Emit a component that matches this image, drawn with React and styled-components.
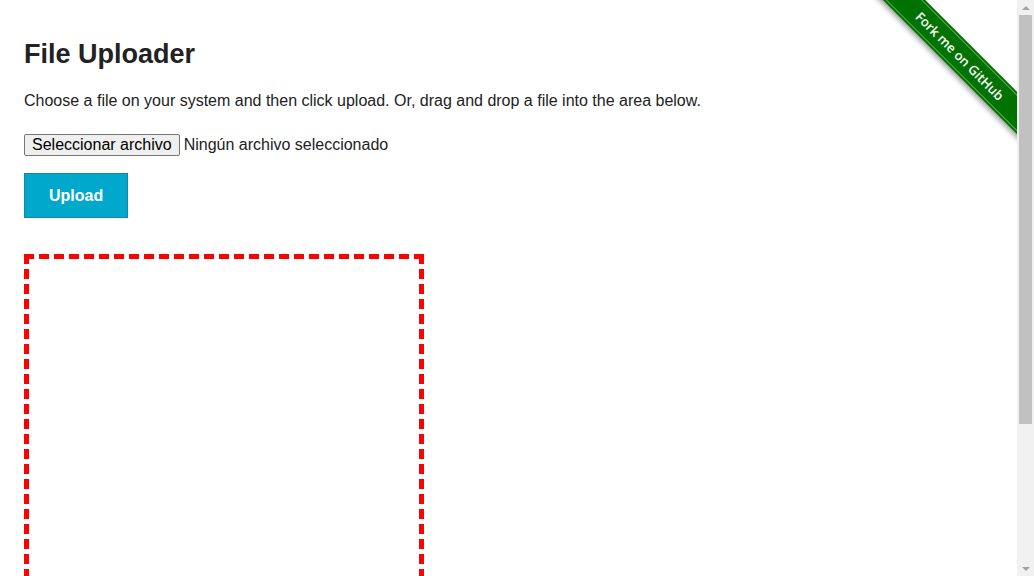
import styled, { createGlobalStyle } from "styled-components";

const GlobalStyle = createGlobalStyle`
   html, body {
      margin: 0;
      padding: 0;
      background: #fff;
   }
   body {
      font-family: "Liberation Sans", Arial, sans-serif;
      color: #222;
      padding-right: 17px;
   }
`

const Page = styled.div`
   position: relative;
   padding: 39px 24px 40px;
`

const Title = styled.h1`
   margin: 0;
   font-size: 27px;
   font-weight: bold;
   line-height: 31px;
   color: #222;
`

const Intro = styled.p`
   margin: 22px 0 0;
   font-size: 16px;
   line-height: 18px;
   color: #222;
`

const FileRow = styled.div`
   display: flex;
   align-items: center;
   margin-top: 24px;
   font-size: 16px;
   line-height: 18px;
   color: #222;
`

const FileButton = styled.button`
   font-family: inherit;
   font-size: 16px;
   line-height: 18px;
   padding: 1px 7px;
   margin: 0 4px 0 0;
   background: #efefef;
   border: 1px solid #767676;
   border-radius: 2px;
   color: #000;
`

const UploadButton = styled.button`
   display: block;
   margin-top: 17px;
   padding: 13px 24px;
   font-family: inherit;
   font-size: 16px;
   font-weight: bold;
   line-height: 17px;
   color: #fff;
   background: #00a8cc;
   border: 1px solid #0b89a5;
   border-radius: 0;
`

const DropZone = styled.div`
   margin-top: 36px;
   width: 390px;
   height: 390px;
   border: 5px dashed #ff0000;
`

const RibbonClip = styled.div`
   position: absolute;
   top: 0;
   right: 0;
   width: 149px;
   height: 149px;
   overflow: hidden;
   pointer-events: none;
`

const Ribbon = styled.a`
   position: absolute;
   left: -18px;
   top: 41px;
   width: 220px;
   height: 30px;
   transform: rotate(45deg);
   background: #007200;
   box-shadow: -2px 3px 5px rgba(0, 0, 0, 0.35);
   display: flex;
   align-items: center;
   justify-content: center;
   color: #fff;
   text-decoration: none;
   font-family: "Open Sans", "DejaVu Sans", sans-serif;
   font-weight: 600;
   font-size: 13px;

   &::before, &::after {
      content: "";
      position: absolute;
      left: 0;
      right: 0;
      height: 1px;
      background: rgba(120, 200, 120, 0.7);
   }
   &::before { top: 2px; }
   &::after { bottom: 2px; }
`

/* stand-in for the browser's scrollbar, which headless hides */
const ScrollTrack = styled.div`
   position: fixed;
   top: 0;
   right: 0;
   bottom: 0;
   width: 17px;
   background: #f1f1f1;
   display: flex;
   flex-direction: column;
   align-items: center;
`

const Arrow = styled.div`
   height: 15px;
   width: 17px;
   display: flex;
   align-items: center;
   justify-content: center;
   flex-shrink: 0;

   &::before {
      content: "";
      width: 0;
      height: 0;
      border-left: 4px solid transparent;
      border-right: 4px solid transparent;
      ${(p) => p.$down
         ? "border-top: 4px solid #a3a3a3;"
         : "border-bottom: 4px solid #a3a3a3;"}
   }
`

const Thumb = styled.div`
   width: 13px;
   height: 409px;
   background: #c1c1c1;
`

const Spacer = styled.div`
   flex: 1;
`

const App = () => {
   return (
      <>
         <GlobalStyle />
         <Page>
            <Title>File Uploader</Title>
            <Intro>Choose a file on your system and then click upload. Or, drag and drop a file into the area below.</Intro>
            <FileRow>
               <FileButton type="button">Seleccionar archivo</FileButton>
               <span>Ningún archivo seleccionado</span>
            </FileRow>
            <UploadButton type="button">Upload</UploadButton>
            <DropZone />
            <RibbonClip>
               <Ribbon href="#">Fork me on GitHub</Ribbon>
            </RibbonClip>
         </Page>
         <ScrollTrack>
            <Arrow />
            <Thumb />
            <Spacer />
            <Arrow $down />
         </ScrollTrack>
      </>
   )
}

export default App;
